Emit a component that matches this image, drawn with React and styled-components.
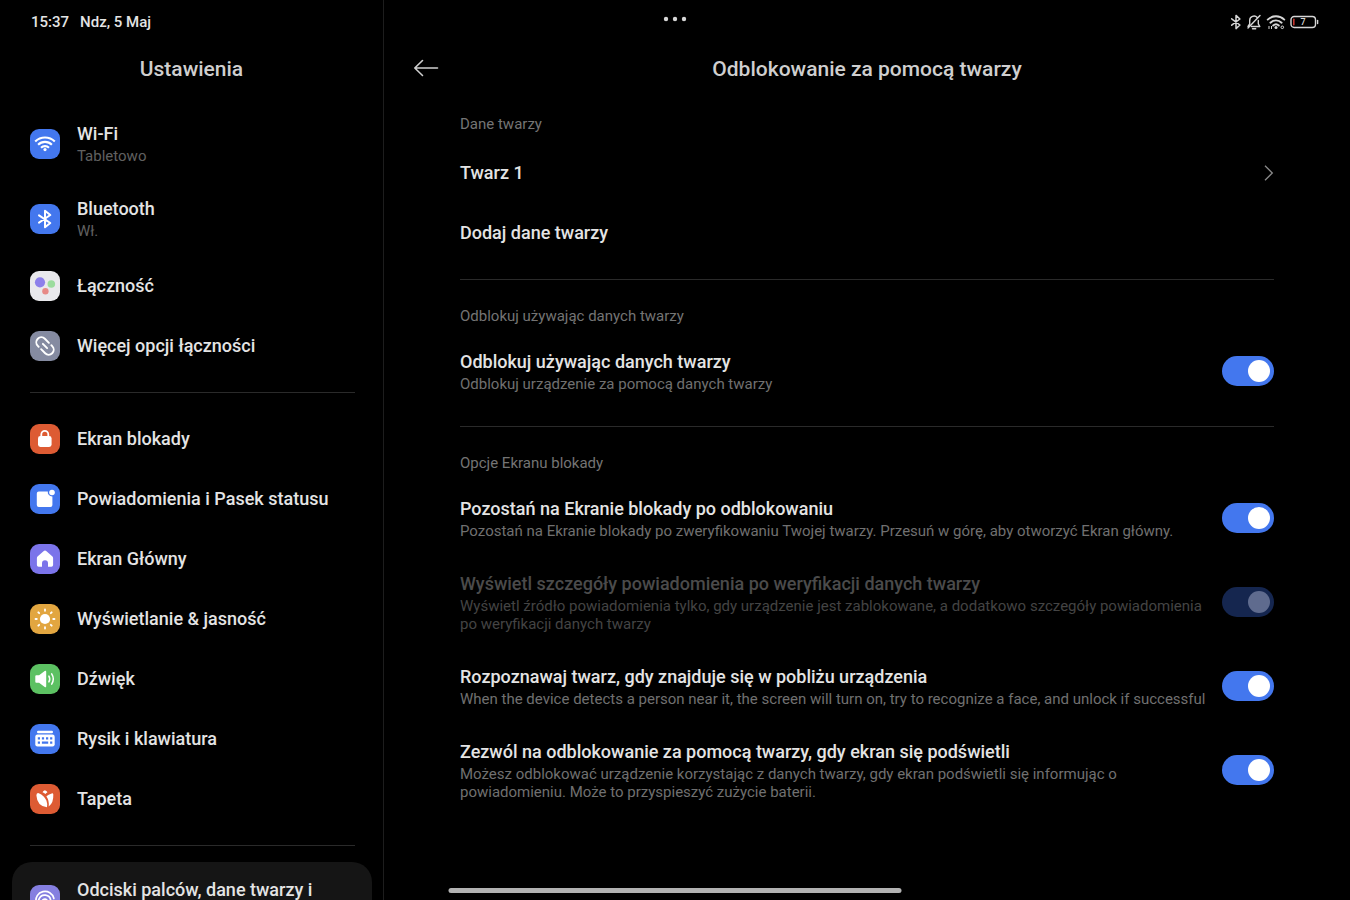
import React, { useState } from "react";
import styled, { createGlobalStyle } from "styled-components";

const GlobalStyle = createGlobalStyle`
  *, *::before, *::after { box-sizing: border-box; }
  body {
    margin: 0;
    background: #000;
    color: #e4e4e4;
    font-family: Roboto, "Noto Sans", sans-serif;
    overflow: hidden;
  }
  h1, h2, p, ul { margin: 0; padding: 0; }
  ul { list-style: none; }
`;

const Page = styled.div`
  display: grid;
  grid-template-columns: 384px minmax(0, 1fr);
  grid-template-rows: 44px minmax(0, 1fr);
  height: 100vh;
  overflow: hidden;
  background: #000;
`;

const StatusBar = styled.header`
  grid-area: 1 / 1 / 2 / 3;
  display: grid;
  grid-template-columns: 1fr auto 1fr;
  align-items: center;
  padding: 0 31px;
`;

const Clock = styled.div`
  display: flex;
  gap: 11px;
  font-size: 15px;
  font-weight: 500;
  line-height: 18px;
`;

const MoreButton = styled.button`
  align-self: start;
  display: flex;
  margin: 0;
  padding: 16px 0 0;
  border: 0;
  background: none;
  color: #d6d6d6;
`;

const StatusIcons = styled.div`
  display: flex;
  justify-content: flex-end;
  align-items: center;
  gap: 4px;
  color: #d6d6d6;
`;

const Sidebar = styled.aside`
  grid-area: 1 / 1 / 3 / 2;
  padding-top: 44px;
  border-right: 1px solid #1d1d1d;
  overflow: hidden;
`;

const Main = styled.main`
  grid-area: 1 / 2 / 3 / 3;
  padding-top: 44px;
  overflow: hidden;
`;

const TitleBar = styled.div`
  display: grid;
  grid-template-columns: 64px minmax(0, 1fr) 64px;
  align-items: center;
  height: 50px;
  margin-bottom: ${(p) => p.$gap}px;
  padding: 0 10px;
`;

const Title = styled.h1`
  grid-column: 2;
  font-size: 21px;
  font-weight: 500;
  line-height: 26px;
  text-align: center;
  white-space: nowrap;
  color: #cfcfcf;
`;

const BackButton = styled.button`
  justify-self: center;
  display: flex;
  margin: 0;
  padding: 0;
  border: 0;
  background: none;
  color: #cfcfcf;
`;

const NavGroup = styled.ul`
  padding: 0 11px 0 12px;
`;

const NavLink = styled.a`
  display: flex;
  align-items: center;
  gap: 17px;
  min-height: ${(p) => (p.$tall ? 75 : 60)}px;
  padding: ${(p) => (p.$tall ? "17px 18px 16px" : "15px 18px")};
  border-radius: 20px;
  color: inherit;
  text-decoration: none;
  background: ${(p) => (p.$active ? "#151515" : "none")};
`;

const Tile = styled.span`
  flex: none;
  width: 30px;
  height: 30px;
  border-radius: 9px;
  background: ${(p) => p.$color};
  color: #fff;
  svg { display: block; }
`;

const RowText = styled.span`
  display: flex;
  flex: 1;
  flex-direction: column;
  align-self: ${(p) => (p.$top ? "flex-start" : "center")};
  gap: 2px;
  min-width: 0;
`;

const RowLabel = styled.span`
  font-size: 18px;
  font-weight: 500;
  line-height: 22px;
  color: ${(p) => (p.$disabled ? "#4b4b4b" : "#e4e4e4")};
`;

const RowNote = styled.span`
  font-size: 15px;
  line-height: 18px;
  color: ${(p) => (p.$disabled ? "#444" : "#707070")};
`;

const NavNote = styled(RowNote)`
  color: #606060;
`;

const Divider = styled.hr`
  height: 1px;
  margin: 16px 0 17px;
  border: 0;
  background: #2a2a2a;
`;

const NavDivider = styled(Divider)`
  margin: 16px 28px 16px 30px;
`;

const Content = styled.div`
  padding: 0 76px;
`;

const SectionTitle = styled.h2`
  padding: 10px 0;
  font-size: 15px;
  font-weight: 400;
  line-height: 18px;
  color: #747474;
`;

const LinkRow = styled.a`
  display: flex;
  align-items: center;
  justify-content: space-between;
  height: 60px;
  color: inherit;
  text-decoration: none;
`;

const SwitchRow = styled.label`
  display: flex;
  align-items: center;
  gap: 12px;
  padding: 16px 0 17px;
`;

const Switch = styled.input.attrs({ type: "checkbox", role: "switch" })`
  appearance: none;
  flex: none;
  display: flex;
  justify-content: ${(p) => (p.checked ? "flex-end" : "flex-start")};
  align-items: center;
  width: 52px;
  height: 30px;
  margin: 0 0 2px;
  padding: 0 4px;
  border-radius: 15px;
  background: ${(p) => (p.checked ? "#4377ee" : "#333")};
  &::before {
    content: "";
    width: 22px;
    height: 22px;
    border-radius: 50%;
    background: #fff;
  }
  &:disabled { background: #15264f; }
  &:disabled::before { background: #5f6b8e; }
`;

const HomeIndicator = styled.div`
  position: absolute;
  bottom: 7px;
  left: 50%;
  width: 34%;
  max-width: 453px;
  height: 5px;
  border-radius: 3px;
  background: #b2b2b2;
  transform: translateX(-50%);
`;

const BatteryText = styled.text`
  font: 500 9px Roboto, sans-serif;
`;

const stroke = { fill: "none", stroke: "currentColor", strokeLinecap: "round", strokeLinejoin: "round" };

const glyphs = {
  wifi: (
    <g {...stroke} strokeWidth="2.1" strokeLinecap="butt">
      <path d="M5.2 12.6A13.8 13.8 0 0 1 24.8 12.6" />
      <path d="M8.1 15.8A9.7 9.7 0 0 1 21.9 15.8" />
      <path d="M11 18.8A5.7 5.7 0 0 1 19 18.8" />
      <circle cx="15" cy="20.6" r="1.6" fill="currentColor" stroke="none" />
    </g>
  ),
  bluetooth: <path {...stroke} strokeWidth="2" d="M9 11.4L20.3 19 15 23.3V6.7L20.3 11 9 18.6" />,
  connect: (
    <>
      <circle cx="10" cy="11.3" r="5.1" fill="#8d80ea" />
      <circle cx="21.3" cy="13" r="3.8" fill="#9bdc9d" />
      <circle cx="15.4" cy="20.2" r="3.2" fill="#e78a86" />
    </>
  ),
  link: (
    <g {...stroke} strokeWidth="1.9" transform="rotate(45 15 15)">
      <path d="M15.5 10H9.8a5 5 0 0 0 0 10H11" />
      <path d="M14.5 20h5.7a5 5 0 0 0 0-10H19" />
      <path d="M12 15h6" />
    </g>
  ),
  lock: (
    <>
      <path d="M11.3 13V10.4a3.5 3.5 0 0 1 7 0V13" {...stroke} strokeWidth="1.8" />
      <rect x="8" y="12" width="13.6" height="11" rx="2.4" fill="currentColor" />
    </>
  ),
  notice: (
    <>
      <path fill="currentColor" d="M8.8 7.4H17.8a4.4 4.4 0 0 0 4.6 5V21a2 2 0 0 1-2 2H8.8a2 2 0 0 1-2-2V9.4a2 2 0 0 1 2-2z" />
      <circle cx="22" cy="8.5" r="2.8" fill="currentColor" />
    </>
  ),
  home: (
    <path
      fill="currentColor"
      d="M13.5 7.3a2.2 2.2 0 0 1 3 0l5.7 5a2.5 2.5 0 0 1 .9 1.9V21a1.8 1.8 0 0 1-1.8 1.8H18v-3.6a3 3 0 0 0-6 0v3.6H8.7A1.8 1.8 0 0 1 6.9 21v-6.8a2.5 2.5 0 0 1 .9-1.9z"
    />
  ),
  sun: (
    <g {...stroke} strokeWidth="1.8">
      <circle cx="15" cy="15" r="5.1" fill="currentColor" stroke="none" />
      <path d="M15 5.5v1.3M15 23.2v1.3M5.5 15h1.3M23.2 15h1.3M8.3 8.3l.9.9M20.8 20.8l.9.9M8.3 21.7l.9-.9M20.8 9.2l.9-.9" />
    </g>
  ),
  sound: (
    <>
      <path
        fill="currentColor"
        d="M5.3 12.3q0-1 1-1h2.8l5.6-4.2q1.5-.9 1.5.7v14.4q0 1.6-1.5.7l-5.6-4.2H6.3q-1 0-1-1z"
      />
      <path d="M18.9 12.1q1.7 2.9 0 5.8M21.7 9.9q3.2 5.1 0 10.2" {...stroke} strokeWidth="1.5" />
    </>
  ),
  keyboard: (
    <>
      <rect x="7" y="6.8" width="16" height="2.4" rx="1.2" fill="currentColor" />
      <rect x="5.3" y="10.6" width="19.4" height="11.8" rx="2.2" fill="currentColor" />
      <path
        d="M7.8 14.3h2.2M11.9 14.3h2.2M16 14.3h2.2M20.1 14.3h2.2M7.8 18.7h2.2M11.9 18.7h6.3M20.1 18.7h2.2"
        stroke="#4377ee"
        strokeWidth="2.2"
      />
    </>
  ),
  tulip: (
    <g fill="currentColor">
      <path d="M6.4 11.6q0-3.2 2.4-2.4 5.4 2.2 7.6 7.4 1.3 3.4.6 6.7-9.800-.8-10.600-11.700z" />
      <path d="M23.3 10.600q-.1-1.600-1.600-1.200-3.400.9-5.300 2.900 3 4.600 2.300 10.200 5-3.400 4.600-11.900z" />
      <path d="M14.800 6.200q1.800.7 2.700 2-1.200.7-2.100 1.800-1.300-1.100-2.900-1.700.8-1.400 2.300-2.100z" />
    </g>
  ),
  finger: (
    <g {...stroke} strokeWidth="1.700">
      <path d="M6.2 17.5a9 9 0 0 1 17.600-4.200M23.900 15.500q0 1.500-1 2.500" />
      <path d="M9 21a8 8 0 0 1 0-6.800 6 6 0 0 1 11.700 1.700q0 3-2.200 3.300" />
      <path d="M12 22q-1-5 .8-7 2.600-2 4.700.8" />
      <path d="M15 16.500v3" />
    </g>
  ),
};

function Glyph({ name }) {
  return (
    <svg width="30" height="30" viewBox="0 0 30 30" aria-hidden="true">
      {glyphs[name]}
    </svg>
  );
}

const navGroups = [
  [
    { icon: "wifi", color: "#4377ee", label: "Wi-Fi", note: "Tabletowo" },
    { icon: "bluetooth", color: "#4377ee", label: "Bluetooth", note: "Wł." },
    { icon: "connect", color: "#e9e9ec", label: "Łączność" },
    { icon: "link", color: "#858ba1", label: "Więcej opcji łączności" },
  ],
  [
    { icon: "lock", color: "#dd5b33", label: "Ekran blokady" },
    { icon: "notice", color: "#4377ee", label: "Powiadomienia i Pasek statusu" },
    { icon: "home", color: "#7b74ea", label: "Ekran Główny" },
    { icon: "sun", color: "#e2a640", label: "Wyświetlanie & jasność" },
    { icon: "sound", color: "#5cc162", label: "Dźwięk" },
    { icon: "keyboard", color: "#4377ee", label: "Rysik i klawiatura" },
    { icon: "tulip", color: "#dd5b33", label: "Tapeta" },
  ],
  [{ icon: "finger", color: "#857fe0", label: "Odciski palców, dane twarzy i", active: true }],
];

const lockOptions = [
  {
    label: "Pozostań na Ekranie blokady po odblokowaniu",
    note: "Pozostań na Ekranie blokady po zweryfikowaniu Twojej twarzy. Przesuń w górę, aby otworzyć Ekran główny.",
  },
  {
    label: "Wyświetl szczegóły powiadomienia po weryfikacji danych twarzy",
    note: "Wyświetl źródło powiadomienia tylko, gdy urządzenie jest zablokowane, a dodatkowo szczegóły powiadomienia po weryfikacji danych twarzy",
    disabled: true,
  },
  {
    label: "Rozpoznawaj twarz, gdy znajduje się w pobliżu urządzenia",
    note: "When the device detects a person near it, the screen will turn on, try to recognize a face, and unlock if successful",
  },
  {
    label: "Zezwól na odblokowanie za pomocą twarzy, gdy ekran się podświetli",
    note: "Możesz odblokować urządzenie korzystając z danych twarzy, gdy ekran podświetli się informując o powiadomieniu. Może to przyspieszyć zużycie baterii.",
  },
];

function ToggleOption({ label, note, disabled }) {
  const [on, setOn] = useState(true);
  return (
    <SwitchRow>
      <RowText>
        <RowLabel $disabled={disabled}>{label}</RowLabel>
        <RowNote $disabled={disabled}>{note}</RowNote>
      </RowText>
      <Switch checked={on} disabled={disabled} onChange={(e) => setOn(e.target.checked)} />
    </SwitchRow>
  );
}

function NavItem({ icon, color, label, note, active }) {
  return (
    <li>
      <NavLink href="#" $tall={Boolean(note) || active} $active={active} aria-current={active ? "page" : undefined}>
        <Tile $color={color}>
          <Glyph name={icon} />
        </Tile>
        <RowText $top={active}>
          <RowLabel>{label}</RowLabel>
          {note && <NavNote>{note}</NavNote>}
        </RowText>
      </NavLink>
    </li>
  );
}

export default function App() {
  return (
    <Page>
      <GlobalStyle />
      <Sidebar>
        <TitleBar $gap={12}>
          <Title>Ustawienia</Title>
        </TitleBar>
        <nav>
          {navGroups.map((group, i) => (
            <React.Fragment key={i}>
              {i > 0 && <NavDivider />}
              <NavGroup>
                {group.map((item) => (
                  <NavItem key={item.label} {...item} />
                ))}
              </NavGroup>
            </React.Fragment>
          ))}
        </nav>
      </Sidebar>

      <Main>
        <TitleBar $gap={11}>
          <BackButton aria-label="Wstecz">
            <svg width="26" height="20" viewBox="0 0 26 20" aria-hidden="true">
              <path {...stroke} strokeWidth="1.6" d="M9.5 1.5L1.8 9l7.7 7.5M2 9h22.500" />
            </svg>
          </BackButton>
          <Title>Odblokowanie za pomocą twarzy</Title>
        </TitleBar>
        <Content>
          <section>
            <SectionTitle>Dane twarzy</SectionTitle>
            <LinkRow href="#">
              <RowLabel>Twarz 1</RowLabel>
              <svg width="11" height="18" viewBox="0 0 11 18" aria-hidden="true">
                <path fill="none" stroke="#8a8a8a" strokeWidth="1.3" d="M2 1.8L9.3 9 2 16.2" />
              </svg>
            </LinkRow>
            <LinkRow href="#">
              <RowLabel>Dodaj dane twarzy</RowLabel>
            </LinkRow>
          </section>
          <Divider />
          <section>
            <SectionTitle>Odblokuj używając danych twarzy</SectionTitle>
            <ToggleOption label="Odblokuj używając danych twarzy" note="Odblokuj urządzenie za pomocą danych twarzy" />
          </section>
          <Divider />
          <section>
            <SectionTitle>Opcje Ekranu blokady</SectionTitle>
            {lockOptions.map((option) => (
              <ToggleOption key={option.label} {...option} />
            ))}
          </section>
        </Content>
      </Main>

      <StatusBar>
        <Clock>
          <span>15:37</span>
          <span>Ndz, 5 Maj</span>
        </Clock>
        <MoreButton aria-label="Więcej">
          <svg width="24" height="6" viewBox="0 0 24 6" fill="currentColor" aria-hidden="true">
            <circle cx="3" cy="3" r="2.2" />
            <circle cx="12" cy="3" r="2.2" />
            <circle cx="21" cy="3" r="2.2" />
          </svg>
        </MoreButton>
        <StatusIcons>
          <svg width="12" height="16" viewBox="0 0 12 16" aria-hidden="true">
            <path {...stroke} strokeWidth="1.5" d="M1.7 4.8l8.2 6.2L6 14.6V1.4l3.9 3.6-8.2 6.2" />
          </svg>
          <svg width="16" height="16" viewBox="0 0 16 16" aria-hidden="true">
            <g {...stroke} strokeWidth="1.4">
              <path d="M11.2 3.5A4.3 4.3 0 0 0 3.7 6.4v3.4L2 12.3M5.5 12.5h8.3l-1.5-2.7V6.5M6.5 14.8h3.2M14 1.5L2 14" />
            </g>
          </svg>
          <svg width="20" height="16" viewBox="0 0 20 16" aria-hidden="true">
            <g {...stroke} strokeWidth="1.9">
              <path d="M1.7 5.6a12 12 0 0 1 16.6 0M4.4 8.7a8 8 0 0 1 11.2 0M7.2 11.5a4.2 4.2 0 0 1 5.6 0" />
            </g>
            <circle cx="10" cy="13.6" r="1.5" fill="currentColor" />
            <path d="M3 12v3M5.5 12v3" stroke="currentColor" strokeWidth="1" />
            <circle cx="16.3" cy="13.3" r="1.3" fill="none" stroke="currentColor" />
          </svg>
          <svg width="29" height="14" viewBox="0 0 29 14" aria-hidden="true">
            <rect x="1" y="1.5" width="24.5" height="11" rx="3.2" fill="none" stroke="currentColor" strokeWidth="1.4" />
            <rect x="3" y="3.5" width="1.6" height="7" rx=".8" fill="#c8372f" />
            <path d="M27.6 5.5v3" {...stroke} strokeWidth="1.4" />
            <BatteryText x="13" y="10.3" textAnchor="middle" fill="currentColor">7</BatteryText>
          </svg>
        </StatusIcons>
      </StatusBar>
      <HomeIndicator />
    </Page>
  );
}
